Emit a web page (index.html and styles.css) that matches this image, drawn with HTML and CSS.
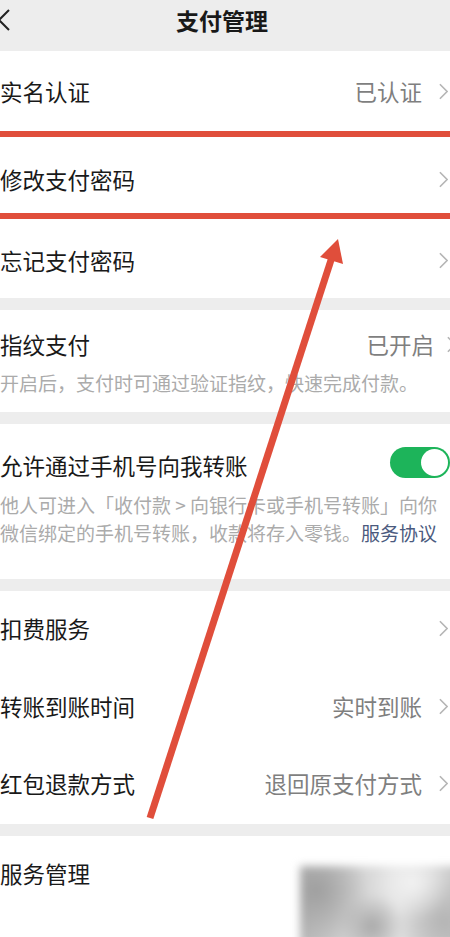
FILE: index.html
```html
<!DOCTYPE html>
<html lang="zh-CN">
  <head>
    <meta charset="UTF-8" />
    <meta name="viewport" content="width=device-width, initial-scale=1.0" />
    <title>支付管理</title>
    <link rel="stylesheet" href="styles.css">
  </head>
  <body>
    <div class="page">
      <header class="nav">
        <svg class="back" viewBox="0 0 12 24"><polyline points="9,2 -1,12 9,22" /></svg>
        <h1>支付管理</h1>
      </header>

      <section class="group first">
        <div class="cell">
          <span class="label">实名认证</span>
          <span class="value">已认证</span>
          <svg class="chev" viewBox="0 0 10 18"><polyline points="1,1 9,9 1,17" /></svg>
        </div>
        <div class="cell pwd">
          <span class="label">修改支付密码</span>
          <svg class="chev" viewBox="0 0 10 18"><polyline points="1,1 9,9 1,17" /></svg>
        </div>
        <div class="cell forgot">
          <span class="label">忘记支付密码</span>
          <svg class="chev" viewBox="0 0 10 18"><polyline points="1,1 9,9 1,17" /></svg>
        </div>
        <!-- red box drawn on the screenshot -->
        <div class="mark"></div>
      </section>

      <section class="group block finger">
        <div class="head">
          <span class="label">指纹支付</span>
          <span class="value">已开启</span>
          <svg class="chev" viewBox="0 0 10 18"><polyline points="1,1 9,9 1,17" /></svg>
        </div>
        <p class="desc">开启后，支付时可通过验证指纹，快速完成付款。</p>
      </section>

      <section class="group block phone">
        <div class="head">
          <span class="label">允许通过手机号向我转账</span>
          <span class="switch"><span class="knob"></span></span>
        </div>
        <p class="desc">他人可进入「收付款 &gt; 向银行卡或手机号转账」向你<br>微信绑定的手机号转账，收款将存入零钱。<a class="link">服务协议</a></p>
      </section>

      <section class="group list">
        <div class="cell">
          <span class="label">扣费服务</span>
          <svg class="chev" viewBox="0 0 10 18"><polyline points="1,1 9,9 1,17" /></svg>
        </div>
        <div class="cell">
          <span class="label">转账到账时间</span>
          <span class="value">实时到账</span>
          <svg class="chev" viewBox="0 0 10 18"><polyline points="1,1 9,9 1,17" /></svg>
        </div>
        <div class="cell">
          <span class="label">红包退款方式</span>
          <span class="value">退回原支付方式</span>
          <svg class="chev" viewBox="0 0 10 18"><polyline points="1,1 9,9 1,17" /></svg>
        </div>
      </section>

      <section class="group list">
        <div class="cell">
          <span class="label">服务管理</span>
        </div>
        <div class="cell"></div>
      </section>

      <!-- arrow drawn on the screenshot -->
      <svg class="pointer" viewBox="0 0 450 937">
        <line x1="150" y1="818" x2="332" y2="257" />
        <polygon points="338,239 320,257 343,264" />
      </svg>
      <div class="smudge"></div>
    </div>
  </body>
</html>
```

FILE: styles.css
```css
body {
  margin: 0;
  padding: 0;
  background-color: #ededed;
  font-family: "Noto Sans CJK SC", "Noto Sans", sans-serif;
  color: #191919;
}

.page {
  position: relative;
  width: 450px;
  height: 937px;
  overflow: hidden;
  background: #ededed;
}

.nav {
  height: 51px;
  display: flex;
  align-items: center;
  justify-content: center;
  padding-right: 6px;
  background: #ededed;
}

.nav h1 {
  margin: 0;
  font-size: 23px;
  font-weight: 700;
  line-height: 1;
  position: relative;
  top: -5px;
}

.nav .back {
  position: absolute;
  left: 0;
  top: 8px;
  width: 12px;
  height: 24px;
  fill: none;
  stroke: #222;
  stroke-width: 2;
}

.group {
  background: #fff;
  margin-bottom: 12px;
}

.first {
  position: relative;
}

.cell {
  height: 78px;
  display: flex;
  align-items: center;
  padding-right: 2px;
  padding-bottom: 3px;
  box-sizing: border-box;
}

.first .cell {
  height: 84px;
}

.first .cell.pwd {
  height: 88px;
  padding-bottom: 0;
}

.first .cell.forgot {
  height: 75px;
  padding-bottom: 1px;
}

.list .cell:nth-child(2) {
  height: 77px;
}

.list:last-child .cell:first-child {
  border-bottom: 1px solid #f2f2f2;
}

.label {
  flex: 1;
  font-size: 22.5px;
  line-height: 1.2;
  white-space: nowrap;
}

.value {
  font-size: 22.5px;
  line-height: 1.2;
  color: #7f7f7f;
  margin-right: 17px;
}

.chev {
  width: 9px;
  height: 17px;
  fill: none;
  stroke: #b5b5b5;
  stroke-width: 1.8;
}

.mark {
  position: absolute;
  left: -20px;
  right: -20px;
  top: 80px;
  height: 88px;
  box-sizing: border-box;
  border: 6px solid #e04e3b;
}

.block .head {
  display: flex;
  align-items: center;
  height: 26px;
}

.finger {
  padding: 21px 0 16px;
}

.finger .head .value {
  margin-right: 13px;
}

.finger .chev {
  margin-right: -6px;
}

.phone {
  padding: 26px 0 32px;
}

.phone .head {
  height: 30px;
}

.desc {
  margin: 13px 0 0;
  font-size: 19px;
  line-height: 26px;
  color: #ababab;
  white-space: nowrap;
}

.phone .desc {
  margin-top: 11px;
  line-height: 28px;
}

.link {
  color: #4b5a7e;
}

.switch {
  position: relative;
  width: 60px;
  height: 31px;
  border-radius: 16px;
  background: #1db45a;
  margin-bottom: 5px;
}

.switch .knob {
  position: absolute;
  right: 2px;
  top: 2px;
  width: 27px;
  height: 27px;
  border-radius: 50%;
  background: #fff;
}

.pointer {
  position: absolute;
  left: 0;
  top: 0;
  width: 450px;
  height: 937px;
  pointer-events: none;
}

.pointer line {
  stroke: #e04e3b;
  stroke-width: 7;
}

.pointer polygon {
  fill: #e04e3b;
}

.smudge {
  position: absolute;
  left: 300px;
  top: 866px;
  width: 160px;
  height: 80px;
  background:
    radial-gradient(circle at 10% 30%, #9f9f9f 0, rgba(160, 160, 160, 0) 35%),
    radial-gradient(circle at 45% 75%, #a8a8a8 0, rgba(168, 168, 168, 0) 30%),
    radial-gradient(circle at 70% 20%, #f2f2f2 0, rgba(242, 242, 242, 0) 30%),
    radial-gradient(circle at 90% 70%, #b4b4b4 0, rgba(180, 180, 180, 0) 30%),
    linear-gradient(90deg, #b8b8b8, #d8d8d8 40%, #e2e2e2 60%, #c8c8c8);
  filter: blur(4px);
}
```
